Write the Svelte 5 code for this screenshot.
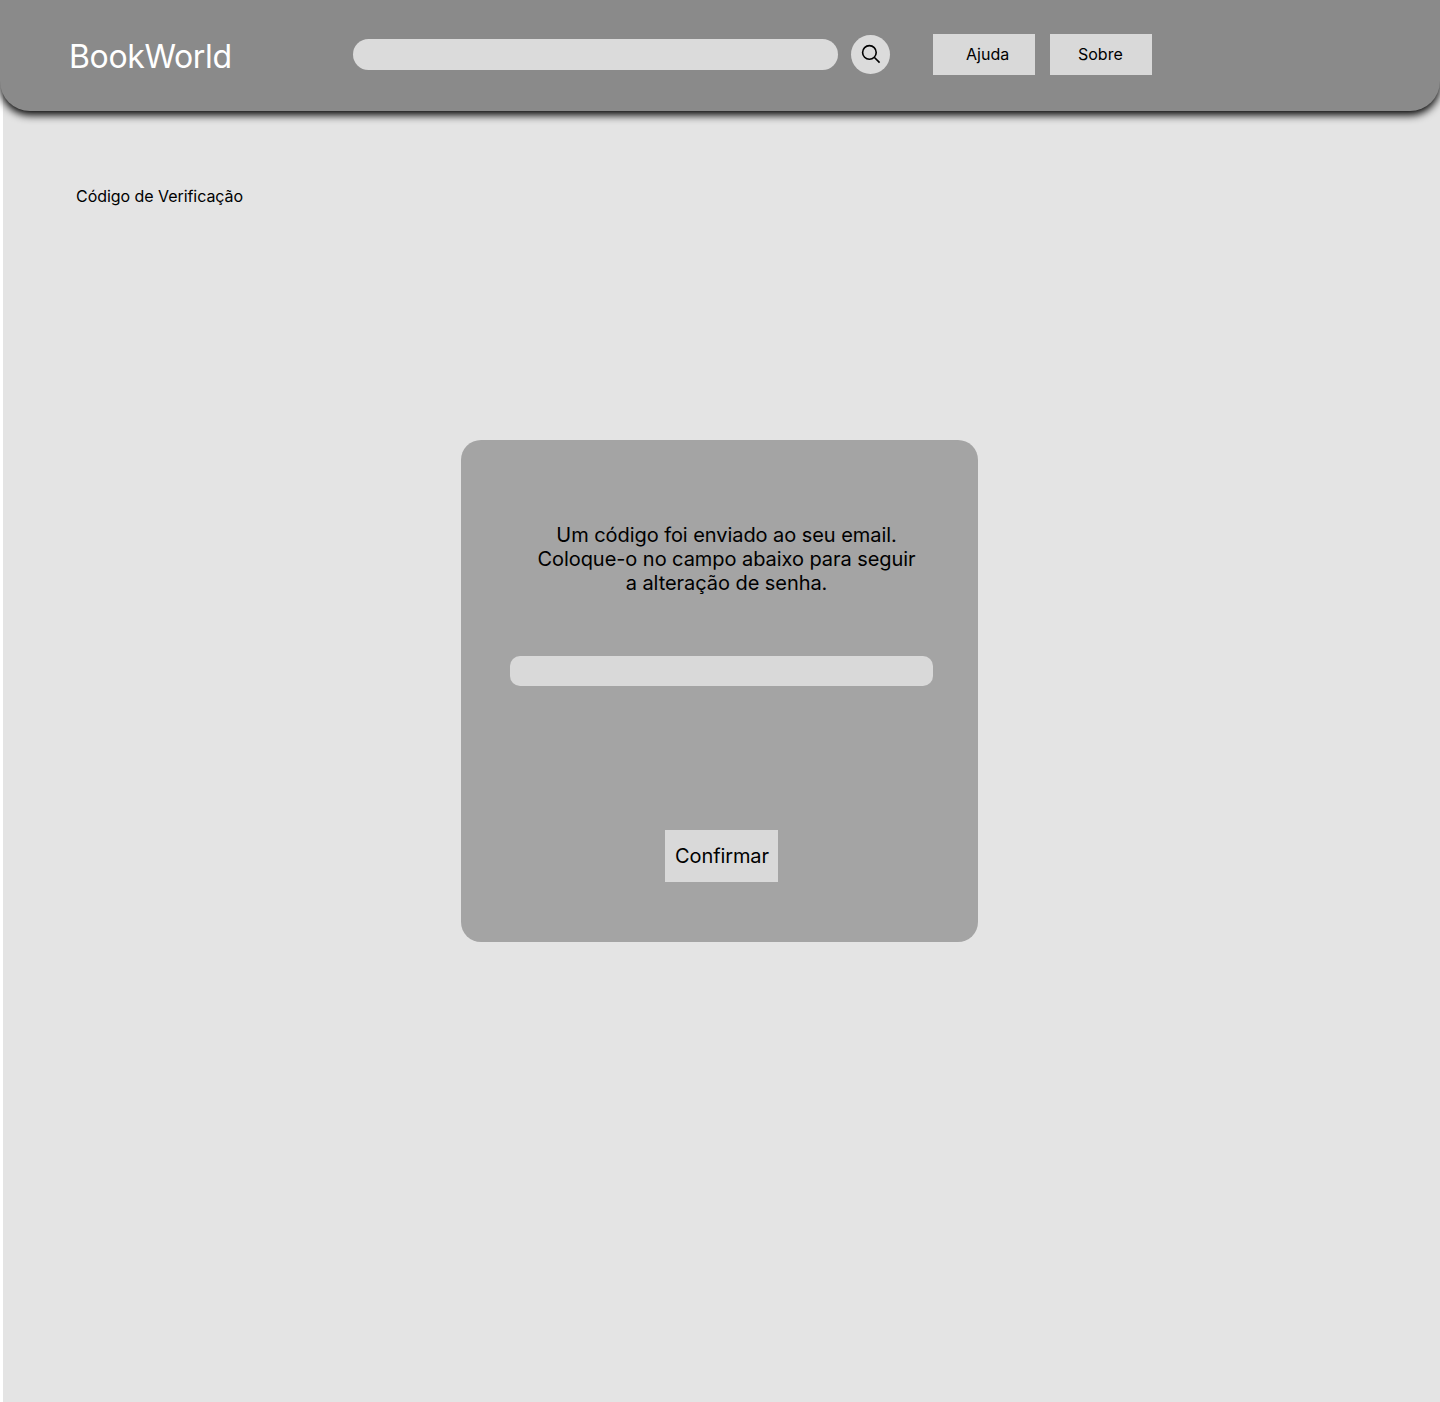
<script>
  const links = [
    { label: 'Ajuda', shift: 33 },
    { label: 'Sobre', shift: 28 },
  ];
</script>

<div class="page">
  <header>
    <div class="brand">BookWorld</div>
    <input class="search" type="text" aria-label="Pesquisar" />
    <button class="round" aria-label="Pesquisar">
      <svg width="20" height="20" viewBox="0 0 20 20" fill="none" stroke="#000" stroke-width="1.6">
        <circle cx="8.4" cy="8.4" r="6.8" />
        <path d="M13.2 13.2 L18.6 18.6" />
      </svg>
    </button>
    <nav>
      {#each links as link}
        <button class="link" style:padding-left="{link.shift}px">{link.label}</button>
      {/each}
    </nav>
  </header>
  <h1>Código de Verificação</h1>
  <main>
    <p>Um código foi enviado ao seu email.<br />Coloque-o no campo abaixo para seguir<br />a alteração de senha.</p>
    <input class="code" type="text" aria-label="Código" />
    <button class="confirm">Confirmar</button>
  </main>
</div>

<style>
  :global(body) {
    margin: 0;
    background: linear-gradient(to right, #fff 3px, #e4e4e4 3px);
  }
  .page {
    height: 1402px;
    overflow: hidden;
    font-family: Inter, sans-serif;
    color: #000;
  }
  input, button {
    box-sizing: border-box;
    border: 0;
    padding: 0;
    margin: 0;
    font: inherit;
    color: inherit;
    background: #d9d9d9;
    flex: none;
  }
  header {
    box-sizing: border-box;
    height: 111px;
    display: flex;
    align-items: flex-start;
    padding: 33px 0 0 69px;
    background: #8a8a8a;
    border-radius: 0 0 30px 30px;
    box-shadow: 0 4px 9px #000;
  }
  .brand {
    width: 284px;
    font-size: 32px;
    letter-spacing: -0.35px;
    line-height: 48px;
    color: #fff;
  }
  .search {
    width: 485px;
    height: 31px;
    margin-top: 6px;
    border-radius: 16px;
    background: #dbdbdb;
  }
  .round {
    width: 39px;
    height: 39px;
    margin: 2px 0 0 13px;
    border-radius: 50%;
    display: grid;
    place-items: center;
    background: #dbdbdb;
  }
  .round svg {
    margin-bottom: 1px;
  }
  nav {
    display: flex;
    gap: 15px;
    margin: 1px 0 0 43px;
  }
  .link {
    width: 102px;
    height: 41px;
    padding-bottom: 2px;
    text-align: left;
    font-size: 16px;
  }
  h1 {
    margin: 75px 0 0 76px;
    font-size: 16px;
    line-height: 20px;
    font-weight: 400;
    letter-spacing: -0.05px;
  }
  main {
    box-sizing: border-box;
    width: 517px;
    height: 502px;
    margin: 234px 0 0 461px;
    padding-top: 83px;
    border-radius: 20px;
    background: #a4a4a4;
    font-size: 20px;
    line-height: 24px;
    letter-spacing: -0.06px;
  }
  p {
    width: 400px;
    margin: 0 0 0 65.5px;
    text-align: center;
  }
  .code {
    display: block;
    width: 423px;
    height: 30px;
    margin: 61px 0 0 49px;
    border-radius: 10px;
  }
  .confirm {
    display: block;
    width: 113px;
    height: 52px;
    padding-left: 1px;
    margin: 144px 0 0 204px;
    letter-spacing: -0.1px;
  }
</style>
